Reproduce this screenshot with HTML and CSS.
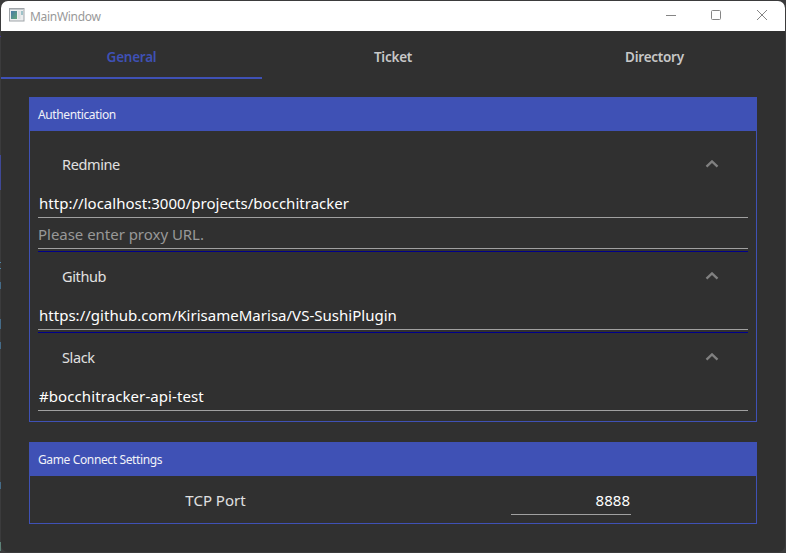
FILE: index.html
```html
<!DOCTYPE html>
<html lang="en">
<head>
<meta charset="utf-8">
<title>MainWindow</title>
<link rel="stylesheet" href="styles.css">
</head>
<body>
<main class="window">
  <header class="titlebar">
    <svg class="app-icon" width="16" height="14" viewBox="0 0 16 14">
      <defs><linearGradient id="pane" x1="0" y1="0" x2="1" y2="1"><stop offset="0" stop-color="#4779a8"/><stop offset="1" stop-color="#63a878"/></linearGradient></defs>
      <rect x=".5" y=".5" width="14.5" height="12.5" fill="#eceeef" stroke="#a0a5a9"/>
      <path d="M1 1.5h13.5" stroke="#c4c9cc"/>
      <rect x="2" y="3" width="6" height="8" fill="url(#pane)"/>
      <rect x="9" y="3" width="2.5" height="8" fill="#dde0e2"/>
      <rect x="12" y="3" width="2" height="4" fill="#9fc3c9"/>
    </svg>
    <span class="title">MainWindow</span>
    <svg class="controls" width="102" height="12" viewBox="0 0 102 12" fill="none" stroke="#858585">
      <path d="M0 6.5h10"/>
      <rect x="45.500" y="1.500" width="9" height="9" rx="1"/>
      <path d="M91 1l10 10M101 1L91 11"/>
    </svg>
  </header>
  <nav class="tabs">
    <div class="tab active"><span>General</span></div>
    <div class="tab"><span>Ticket</span></div>
    <div class="tab"><span>Directory</span></div>
  </nav>
  <section class="group">
    <h2>Authentication</h2>
    <div class="services">
      <div class="service">
        <div class="service-head"><span>Redmine</span><svg width="14" height="8" viewBox="0 0 14 8"><path d="M1.500 6.700L7 1.400l5.500 5.300"/></svg></div>
        <div class="field">http://localhost:3000/projects/bocchitracker</div>
        <div class="field hint">Please enter proxy URL.</div>
      </div>
      <div class="service">
        <div class="service-head"><span>Github</span><svg width="14" height="8" viewBox="0 0 14 8"><path d="M1.500 6.700L7 1.400l5.500 5.300"/></svg></div>
        <div class="field">https://github.com/KirisameMarisa/VS-SushiPlugin</div>
      </div>
      <div class="service">
        <div class="service-head"><span>Slack</span><svg width="14" height="8" viewBox="0 0 14 8"><path d="M1.500 6.700L7 1.400l5.500 5.300"/></svg></div>
        <div class="field channel">#bocchitracker-api-test</div>
      </div>
    </div>
  </section>
  <section class="group">
    <h2>Game Connect Settings</h2>
    <div class="port-row">
      <div class="port-label">TCP Port</div>
      <div class="port-cell"><div class="field port">8888</div></div>
    </div>
  </section>
</main>
</body>
</html>
```
FILE: styles.css
```css
* { box-sizing: border-box; }
body {
  margin: 0;
  width: 786px;
  height: 553px;
  padding: 1px;
  overflow: hidden;
  font-family: "Noto Sans", "Open Sans", sans-serif;
  color: #e0e0e0;
  /* sliver of the desktop behind the window */
  background:
    linear-gradient(#3f4896, #3f4896) 0 155px / 1px 35px no-repeat,
    linear-gradient(#3f2e9c, #3f2e9c) 0 36px / 1px 1px no-repeat,
    linear-gradient(#4d86a8, #4d86a8) 0 262px / 1px 1px no-repeat,
    linear-gradient(#4d86a8, #4d86a8) 0 268px / 1px 1px no-repeat,
    linear-gradient(#456b88, #456b88) 0 282px / 1px 7px no-repeat,
    linear-gradient(#456b88, #456b88) 0 319px / 1px 10px no-repeat,
    linear-gradient(#456b88, #456b88) 0 342px / 1px 7px no-repeat,
    linear-gradient(#456b88, #456b88) 0 482px / 1px 7px no-repeat,
    linear-gradient(#5d8277, #5d8277) 0 542px / 1px 9px no-repeat,
    #3b3b3c;
}
.window {
  width: 784px;
  height: 551px;
  background: #303030;
  border-radius: 7px;
  overflow: hidden;
}
.titlebar {
  height: 30px;
  background: #fff;
  display: flex;
  align-items: center;
  padding: 0 17px 0 8px;
}
.app-icon { margin-bottom: 2px; }
.title { margin-left: 5px; font-size: 12px; color: #999; letter-spacing: -.3px; }
.controls { margin-left: auto; margin-bottom: 2px; }
.tabs { display: grid; grid-template-columns: 261px 262px 261px; height: 48px; margin-bottom: 18px; }
.tab {
  display: flex;
  align-items: center;
  justify-content: center;
  border-bottom: 2px solid transparent;
  font-size: 13.500px;
  font-weight: 600;
  letter-spacing: -.25px;
  color: #c8c8c8;
}
.tab span { margin-top: 5px; }
.active { border-color: #3f51b5; color: #3f51b5; }
.group { margin: 0 28px 20px; border: 1px solid #3f51b5; }
h2 {
  margin: -1px -1px 0;
  height: 34px;
  padding-left: 9px;
  background: #3f51b5;
  color: #f1f1f8;
  font-size: 12px;
  line-height: 35px;
  font-weight: 400;
  letter-spacing: -.37px;
}
.services { padding: 9px 8px 10px; }
.service + .service { margin-top: 2px; border-top: 1px solid #00008b; }
.service-head {
  height: 48px;
  padding: 0 29px 0 24px;
  display: flex;
  align-items: center;
  justify-content: space-between;
  font-size: 14.500px;
  letter-spacing: -.38px;
}
.service-head svg { fill: none; stroke: #808080; stroke-width: 2.300; }
.field {
  height: 30px;
  border-bottom: 1px solid #a0a0a0;
  padding-left: 1px;
  font-size: 15px;
  line-height: 30px;
  letter-spacing: .02px;
  color: #fff;
  white-space: nowrap;
}
.channel { letter-spacing: .09px; }
.hint { height: 31px; padding-left: 0; color: #989898; line-height: 32px; letter-spacing: -.03px; }
.port-row { height: 47px; display: grid; grid-template-columns: 371px 1fr; }
.port-label { text-align: center; font-size: 15px; line-height: 48px; }
.port-cell { padding: 9px 0 0 110px; }
.port { width: 120px; text-align: right; padding-right: 1px; }
```
